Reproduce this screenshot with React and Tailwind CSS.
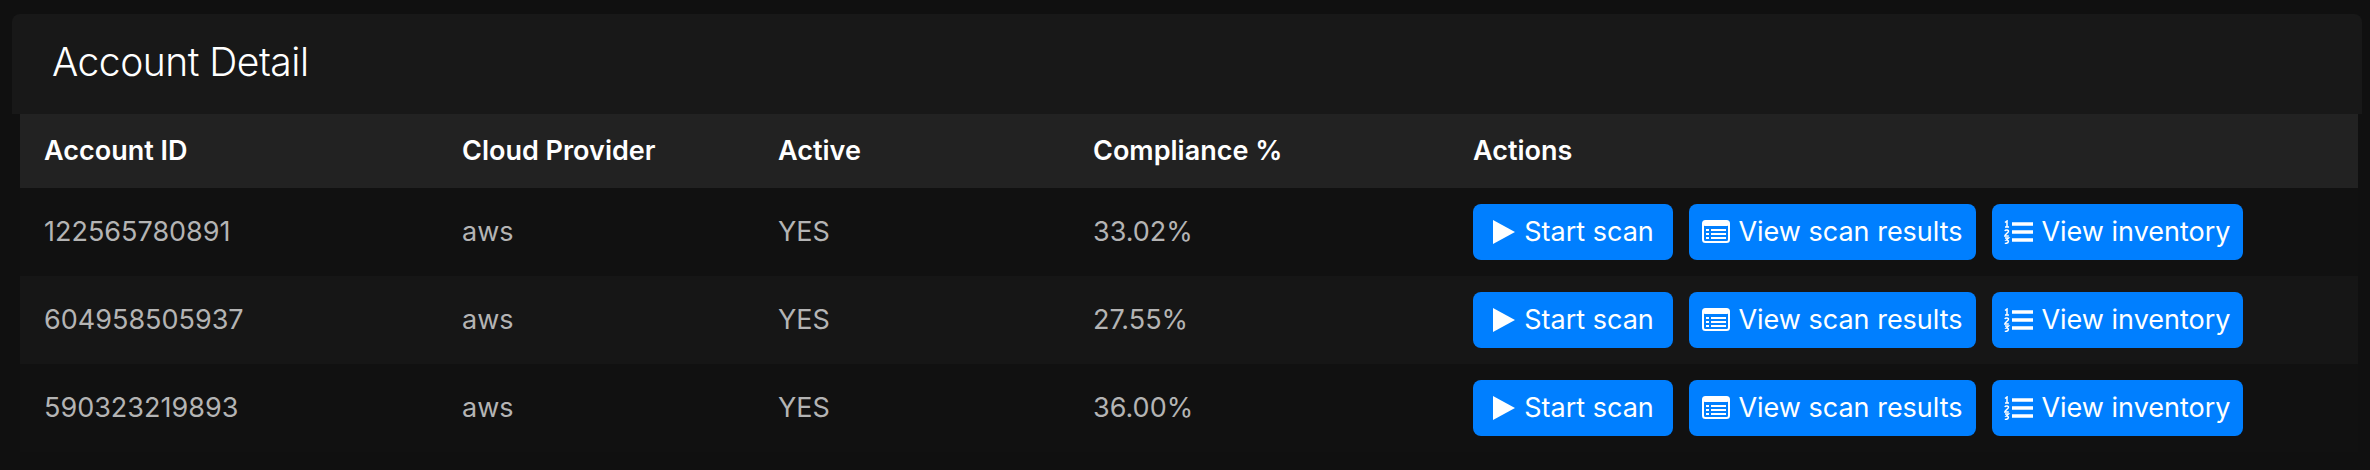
const rows = [
  ["122565780891", "33.02%", "bg-[#111111]"],
  ["604958505937", "27.55%", "bg-[#161616]"],
  ["590323219893", "36.00%", "bg-[#111111]"],
];

function PlayIcon() {
  return (
    <svg width="24" height="24" viewBox="0 0 24 24" className="shrink-0">
      <path d="M1 0 L23 12 L1 24 Z" fill="#fff" />
    </svg>
  );
}

function ResultsIcon() {
  return (
    <svg width="28" height="24" viewBox="0 0 28 24" className="shrink-0">
      <rect x="1" y="1" width="26" height="21" rx="2.5" fill="none" stroke="#fff" strokeWidth="2" />
      <rect x="1" y="1" width="26" height="5" rx="2" fill="#fff" />
      <path d="M4 10h3M9 10h15M4 14h3M9 14h15M4 18h3M9 18h15" stroke="#fff" strokeWidth="2" />
    </svg>
  );
}

function InventoryIcon() {
  return (
    <svg width="29" height="24" viewBox="0 0 29 24" className="shrink-0">
      <path d="M8 4h21M8 12h21M8 20h21" stroke="#fff" strokeWidth="3.4" />
      <path d="M1 2.5 3 1v6M1 7h4" stroke="#fff" strokeWidth="1.5" fill="none" />
      <path d="M.8 11c1-1.8 4-1 3.6.6C4 13 1 14 .8 16h4" stroke="#fff" strokeWidth="1.5" fill="none" />
      <path d="M1 18h3.5L2.5 20c2.5-.3 3 3.6-1.7 3.4" stroke="#fff" strokeWidth="1.5" fill="none" />
    </svg>
  );
}

function ActionButton({ width, icon, label }) {
  return (
    <button className={`flex h-14 items-center justify-center gap-2 rounded-lg bg-[#007fff] text-[27px] text-white ${width}`}>
      {icon}
      <span>{label}</span>
    </button>
  );
}

const col1 = "w-[442px] pl-6 shrink-0";
const col2 = "w-[316px] shrink-0";
const col3 = "w-[315px] shrink-0";
const col4 = "w-[380px] shrink-0";

export default function App() {
  return (
    <div className="h-[470px] w-[2370px] overflow-hidden bg-[#101010] pt-3.5 pl-3 pr-2 font-['Inter','Liberation_Sans',sans-serif]">
      <div className="flex h-[100px] items-center rounded-t-lg bg-[#181818] pb-1 pl-10">
        <h1 className="text-[39px] font-light tracking-[-0.5px] text-white">Account Detail</h1>
      </div>
      <div className="ml-2 mr-1">
        <div className="flex h-[74px] items-center bg-[#222222] text-[27px] font-semibold text-white">
          <div className={col1}>Account ID</div>
          <div className={col2}>Cloud Provider</div>
          <div className={col3}>Active</div>
          <div className={col4}>Compliance %</div>
          <div>Actions</div>
        </div>
        {rows.map(([id, pct, bg]) => (
          <div key={id} className={`flex h-[88px] items-center text-[27px] text-[#b4b4b4] ${bg}`}>
            <div className={col1}>{id}</div>
            <div className={col2}>aws</div>
            <div className={col3}>YES</div>
            <div className={col4}>{pct}</div>
            <div className="flex gap-4">
              <ActionButton width="w-[200px]" icon={<PlayIcon />} label="Start scan" />
              <ActionButton width="w-[287px]" icon={<ResultsIcon />} label="View scan results" />
              <ActionButton width="w-[251px]" icon={<InventoryIcon />} label="View inventory" />
            </div>
          </div>
        ))}
      </div>
    </div>
  );
}
